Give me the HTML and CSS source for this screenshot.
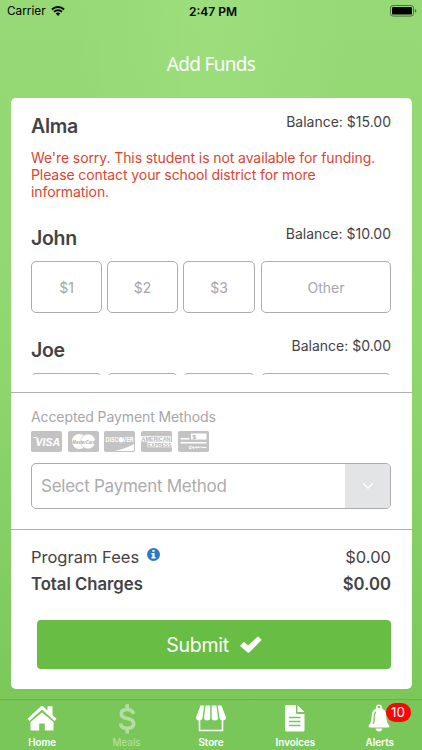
FILE: index.html
```html
<!DOCTYPE html>
<html lang="en">
  <head>
    <meta charset="UTF-8" />
    <meta name="viewport" content="width=device-width, initial-scale=1.0" />
    <title>Add Funds</title>
    <link rel="stylesheet" href="styles.css">
  </head>
  <body>
    <div class="status">
      <div class="carrier">
        <span>Carrier</span>
        <svg width="14" height="10" viewBox="0 0 14 10">
          <path d="M.9 3.5a8.8 8.8 0 0 1 12.2 0M3 5.8a5.8 5.8 0 0 1 8 0" fill="none" stroke="#000" stroke-width="1.9" />
          <path d="M4.7 7.6a3.3 3.3 0 0 1 4.6 0L7 9.9z" />
        </svg>
      </div>
      <div class="time">2:47 PM</div>
      <svg class="battery" width="27" height="12" viewBox="0 0 27 12">
        <rect x=".5" y=".5" width="23" height="10.6" rx="2.6" fill="none" stroke="#4b7138" />
        <rect x="2" y="2" width="20" height="7.6" rx="1.2" />
        <path d="M24.9 4v3.8q1.5-.7 1.5-1.9T24.9 4z" fill="#4b7138" />
      </svg>
    </div>
    <h1>Add Funds</h1>

    <div class="card">
      <div class="students">
        <div class="student">
          <div class="row">
            <h2>Alma</h2>
            <span class="balance">Balance: $15.00</span>
          </div>
          <p class="error">We're sorry. This student is not available for funding.<br />Please contact your school district for more<br />information.</p>
        </div>
        <div class="student">
          <div class="row">
            <h2>John</h2>
            <span class="balance">Balance: $10.00</span>
          </div>
          <div class="amounts">
            <button>$1</button>
            <button>$2</button>
            <button>$3</button>
            <button>Other</button>
          </div>
        </div>
        <div class="student">
          <div class="row">
            <h2>Joe</h2>
            <span class="balance">Balance: $0.00</span>
          </div>
          <div class="amounts">
            <button></button>
            <button></button>
            <button></button>
            <button></button>
          </div>
        </div>
      </div>

      <div class="payment">
        <div class="label">Accepted Payment Methods</div>
        <div class="cards">
          <svg width="31" height="21" viewBox="0 0 31 21">
            <rect width="31" height="21" rx="1.8" fill="#c3c3c4" />
            <path d="M2.5 6.5h2.8q1 0 1.2 1l1 4" fill="none" stroke="#fff" />
            <text x="4.5" y="14.7" class="logo visa" textLength="24.5" lengthAdjust="spacingAndGlyphs">VISA</text>
          </svg>
          <svg width="31" height="21" viewBox="0 0 31 21">
            <rect width="31" height="21" rx="1.8" fill="#c3c3c4" />
            <circle cx="11.3" cy="10.5" r="7.4" fill="#fff" />
            <circle cx="20" cy="10.5" r="7.4" fill="#fff" stroke="#c3c3c4" stroke-width=".6" />
            <text x="4.3" y="12.5" class="logo master" textLength="23" lengthAdjust="spacingAndGlyphs">MasterCard</text>
          </svg>
          <svg width="31" height="21" viewBox="0 0 31 21">
            <rect width="31" height="21" rx="1.8" fill="#c3c3c4" />
            <path d="M30 13v5.5q0 1.5-1.5 1.5H10.5Q22 17.5 30 13z" fill="#fff" />
            <text x="1.6" y="11.3" class="logo discover" textLength="28" lengthAdjust="spacingAndGlyphs">DISCOVER</text>
            <circle cx="17" cy="9" r="2.5" fill="#fff" />
          </svg>
          <svg width="31" height="21" viewBox="0 0 31 21">
            <rect width="31" height="21" rx="1.8" fill="#c3c3c4" />
            <path d="M0 5.2h30v5.3H0zM6.5 11H31v5.3H6.5z" fill="#fff" />
            <text x=".5" y="9.9" class="logo amex" textLength="29" lengthAdjust="spacingAndGlyphs">AMERICAN</text>
            <text x="7" y="15.8" class="logo amex" textLength="23.5" lengthAdjust="spacingAndGlyphs">EXPRESS</text>
          </svg>
          <svg width="31" height="21" viewBox="0 0 31 21">
            <rect width="31" height="21" rx="1.8" fill="#c3c3c4" />
            <path d="M13 2.5h15.5v6H13zM2.5 7h9v1.4h-9zM2.5 11h26v1.6h-26z" fill="#fff" />
            <text x="14.5" y="7.7" class="logo check">$</text>
            <path d="M13.5 15.2q-3 .2-2.5 2 .5 1.2 3-.5l1.5-1q-1 2.3.5 1.5l2.3-1.5q-.8 2 .5 1.2l1.5-1.2q0 1.7 1 1l1.5-.9q.5 1.2 2 .6h3.5" fill="none" stroke="#fff" />
          </svg>
        </div>
        <div class="select">
          <span>Select Payment Method</span>
          <div class="arrow">
            <svg width="12" height="8" viewBox="0 0 12 8">
              <path d="M1.2 1.5 6 6l4.8-4.5" fill="none" stroke="#fff" stroke-width="1.5" />
            </svg>
          </div>
        </div>
      </div>

      <div class="charges">
        <div class="fee">
          <span>Program Fees</span>
          <svg class="info" width="13" height="13" viewBox="0 0 13 13">
            <circle cx="6.5" cy="6.5" r="6.5" fill="#2b7bc4" />
            <path d="M5.3 1.9h2.3v1.9H5.3zM4.4 4.9h3.2v4.2h1v1.5H4.4V9.1h1V6.4h-1z" fill="#fff" />
          </svg>
          <span class="sum">$0.00</span>
        </div>
        <div class="fee total">
          <span>Total Charges</span>
          <span class="sum">$0.00</span>
        </div>
        <button class="submit">
          <span>Submit</span>
          <svg width="22" height="18" viewBox="0 0 22 18">
            <path d="M.6 9.3 3.3 6.5q.8-.7 1.5 0L8 9.5 17.3.9q.7-.7 1.5 0l2.3 2.3q.6.7 0 1.4L9.2 16.600q-.8.7-1.500 0L.6 10.400q-.5-.5 0-1.100z" fill="#fff" />
          </svg>
        </button>
      </div>
    </div>

    <nav>
      <a class="tab">
        <svg width="30" height="28" viewBox="0 0 30 28" fill="#fff">
          <path d="M15 8.5 26.5 18v7.800q0 .7-.7.7h-8v-7h-5.600v7h-8q-.7 0-.7-.7V18z" />
          <path d="M.5 14.800 14 2.300q1-.9 2 0l4.500 4.200V2.300h5v9l4 3.500-1.900 2.200L15 5.600 2.400 17z" />
        </svg>
        <span>Home</span>
      </a>
      <a class="tab off">
        <svg width="30" height="30" viewBox="0 0 30 30">
          <path d="M21.500 9.800Q20.500 5.500 15.200 5.500 9.300 5.500 9.300 9.800q0 3.600 5.900 4.800 6.500 1.300 6.500 5.200 0 4.400-6.500 4.400-6 0-6.700-4.800M15.200.3v5M15.200 24.200v5.300" fill="none" stroke="#b2df9f" stroke-width="3.600" />
        </svg>
        <span>Meals</span>
      </a>
      <a class="tab">
        <svg width="32" height="28" viewBox="0 0 32 28" fill="#fff">
          <path d="M5.500 1.500h3.800L7.500 14q-.5 2.500-3.300 2.500Q1 16.500 1 13.500zM10.500 1.500h4.700V14q0 2.500-2.900 2.500T9 14zM16.700 1.500h4.700L23 14q0 2.500-3.100 2.500T16.700 14zM22.700 1.500h3.800L31 13.500q0 3-3.200 3-2.800 0-3.300-2.500z" />
          <path d="M4.500 16v10.500h23V16" fill="none" stroke="#fff" stroke-width="1.600" stroke-linejoin="round" />
        </svg>
        <span>Store</span>
      </a>
      <a class="tab">
        <svg width="22" height="28" viewBox="0 0 22 28">
          <path d="M2.500 1H12v7.500q0 1.500 1.500 1.500H20.500v16q0 1.500-1.500 1.500H2.500Q1 27.500 1 26V2.500Q1 1 2.500 1zM13.500 1l7 7h-7z" fill="#fff" />
          <path d="M5 13.500h11.500M5 17.500h11.500M5 21.500h11.500" stroke="#7ac759" stroke-width="1.600" />
        </svg>
        <span>Invoices</span>
      </a>
      <a class="tab alerts">
        <svg width="24" height="28" viewBox="0 0 24 28">
          <circle cx="12" cy="3.500" r="2.200" fill="none" stroke="#fff" stroke-width="1.500" />
          <path d="M12 4q7 0 7.300 8 .2 7 3 9.500.7 1.500-1 2H2.700q-1.700-.5-1-2 2.800-2.500 3-9.500Q5 4 12 4z" fill="#fff" />
          <path d="M8.800 8Q7 10 7.200 15q0 3-1 5" fill="none" stroke="#7ac759" stroke-width="1.300" />
          <path d="M8.500 24.500h7q-.7 3-3.500 3t-3.500-3z" fill="#fff" />
        </svg>
        <span>Alerts</span>
        <i class="badge">10</i>
      </a>
    </nav>
  </body>
</html>
```

FILE: styles.css
```css
* {
  margin: 0;
  padding: 0;
  box-sizing: border-box;
}
body {
  display: flex;
  flex-direction: column;
  height: 750px;
  font-family: Inter, "Liberation Sans", sans-serif;
  color: #434345;
  background: radial-gradient(ellipse at 50% 0, rgba(165, 226, 132, 0.5), rgba(165, 226, 132, 0) 45%), linear-gradient(#96d976, #91d770 45%, #78c656);
  overflow: hidden;
}
button {
  font-family: inherit;
  background: #fff;
}
svg {
  display: block;
  flex-shrink: 0;
}
.status {
  display: grid;
  grid-template-columns: 1fr auto 1fr;
  align-items: center;
  height: 22px;
  padding: 0 5px 0 7px;
  font-size: 11.8px;
  color: #000;
}
.carrier {
  display: flex;
  align-items: center;
  gap: 5px;
}
.time {
  padding-left: 2px;
  font-size: 12px;
  font-weight: 600;
}
.battery {
  justify-self: end;
}
h1 {
  height: 76px;
  padding-top: 22px;
  font: 400 19px/40px "Noto Sans", sans-serif;
  letter-spacing: -0.7px;
  text-align: center;
  color: #fff;
}
.card {
  width: 401px;
  height: 591px;
  margin-left: 11px;
  border-radius: 5px;
  background: #fff;
}
.students {
  height: 277px;
  padding: 14px 21px 0 20px;
  overflow: hidden;
}
.student {
  height: 112px;
}
.row {
  display: flex;
  justify-content: space-between;
  height: 37px;
}
h2 {
  font-size: 19.5px;
  font-weight: 600;
  line-height: 29px;
  letter-spacing: -0.3px;
}
.balance {
  font-size: 14px;
  line-height: 20px;
}
.error {
  font-size: 14px;
  line-height: 17px;
  letter-spacing: -0.09px;
  color: #dc4432;
  white-space: nowrap;
}
.amounts {
  display: grid;
  grid-template-columns: 71px 71px 72px 130px;
  gap: 5px;
}
.amounts button {
  height: 52px;
  border: 1px solid #acacae;
  border-radius: 5px;
  font-size: 14px;
  color: #a6a6a8;
}
.amounts button:last-child {
  margin-left: 1px;
  width: 130px;
}
.payment {
  height: 138px;
  margin-top: 17px;
  padding: 15px 21px 0 20px;
  border-top: 1px solid #b0b0b2;
  border-bottom: 1px solid #b0b0b2;
}
.label {
  font-size: 14px;
  line-height: 18px;
  letter-spacing: -0.1px;
  color: #a6a6a8;
}
.cards {
  display: flex;
  gap: 5.7px;
  padding-top: 5px;
}
.logo {
  font-family: "Liberation Sans", sans-serif;
  font-weight: bold;
  fill: #fff;
}
.visa {
  font-size: 11.5px;
  font-style: italic;
}
.master {
  font-size: 5.5px;
  font-style: italic;
  fill: #aaa;
}
.discover {
  font-size: 6.5px;
}
.amex {
  font-size: 5.8px;
  fill: #b5b5b6;
}
.check {
  font-size: 6px;
  fill: #aaa;
}
.select {
  display: flex;
  justify-content: space-between;
  align-items: center;
  height: 46px;
  margin-top: 11px;
  padding-left: 9px;
  border: 1px solid #acacae;
  border-radius: 5px;
  font-size: 17px;
  letter-spacing: -0.27px;
  color: #acacae;
  overflow: hidden;
}
.arrow {
  display: flex;
  align-items: center;
  justify-content: center;
  width: 45px;
  height: 100%;
  background: #e3e4e6;
}
.charges {
  padding: 14px 21px 0 20px;
}
.fee {
  display: flex;
  height: 27px;
  font-size: 16.5px;
  line-height: 27px;
}
.info {
  margin: 4px 0 0 8px;
}
.sum {
  margin-left: auto;
}
.total {
  font-size: 16.7px;
  font-weight: 600;
}
.submit {
  display: flex;
  align-items: center;
  justify-content: center;
  gap: 11px;
  width: 354px;
  height: 49px;
  margin: 22px 0 0 6px;
  border: 0;
  border-radius: 4px;
  font-size: 19.5px;
  letter-spacing: -0.25px;
  color: #fff;
  background: #68bd45;
}
nav {
  display: grid;
  grid-template-columns: repeat(5, 84.4px);
  height: 51px;
  margin-top: 10px;
  border-top: 1px solid #6fb054;
  background: #7ac759;
}
.tab {
  display: flex;
  position: relative;
  flex-direction: column;
  align-items: center;
  justify-content: space-between;
  padding: 4px 0 1px;
  font-size: 9.8px;
  font-weight: 600;
  line-height: 13px;
  color: #fff;
}
.off {
  font-weight: 500;
  color: #b2df9f;
}
.alerts svg {
  margin-left: -2px;
}
.badge {
  position: absolute;
  left: 48px;
  top: 3px;
  width: 25px;
  height: 19px;
  border-radius: 10px;
  font: 400 13.5px/19px Inter, sans-serif;
  text-align: center;
  background: #fb0507;
}
```
